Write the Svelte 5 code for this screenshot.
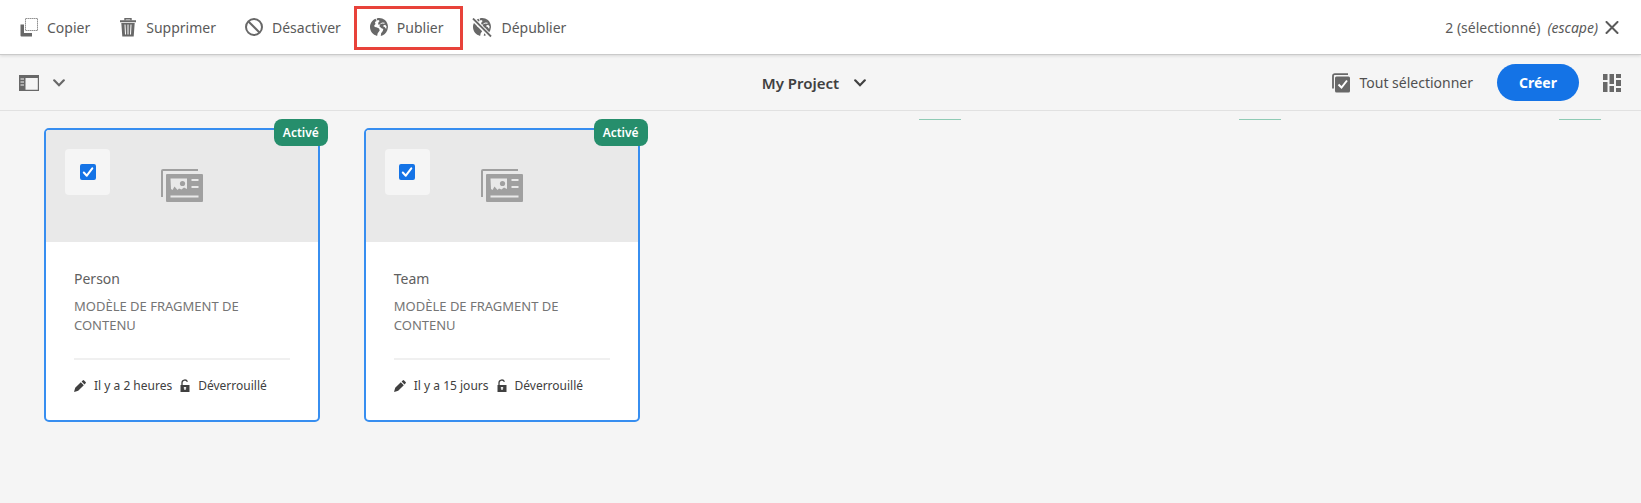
<script>
  let cards = $state([
    { title: 'Person', modified: 'Il y a 2 heures', selected: true },
    { title: 'Team', modified: 'Il y a 15 jours', selected: true }
  ]);
  const emptySlots = [1, 2, 3];
</script>

{#snippet chevron()}
  <svg class="chevron" width="12" height="8" viewBox="0 0 12 8" aria-hidden="true">
    <path d="M1.2 1.3 6 6.2l4.8-4.9" fill="none" stroke="currentColor" stroke-width="2.2" stroke-linecap="round" />
  </svg>
{/snippet}

{#snippet land()}
  <path d="M5.600.8C2.300 2.200 0 5.400 0 9.100c0 4.300 3 7.900 7.100 8.800l.6-2.600 2-2.700-.6-2.100-2.700-1.200-1.700-.2-.5-1.500 1.300-1.500-.6-2 1.700-1z" />
  <path d="M6.700.4C9.600-.5 12.600.2 14.900 2.100c1.800 1.600 3 4.100 3.100 6.900l-.7 3.300c-1.100 2.900-3.500 5-6.500 5.600l.3-2.700 1.700-2.300.5-2-1.800-.6-2-1.700.4-2.100 2.100-1.100 2.400.4.3-1-2-.3-1.600.6-1.400 1.500-1.700-.2.5-2.200 1.200-1.100-1.500-1-1.300.5z" />
  <path d="M15.200 6.700l1.400 1.900-.5 2.300-1.500-1.800-1.600-.9.700-1z" fill="#fff" />
{/snippet}

<div class="page">
  <header class="actions">
    <div class="group">
      <button class="action">
        <svg width="18" height="20" viewBox="0 0 18 20" aria-hidden="true">
          <path d="M.5 6.500H4V15h8v3.500H1.500a1 1 0 0 1-1-1z" fill="currentColor" />
          <path d="M5.500.5h12v12h-12z" fill="none" stroke="currentColor" stroke-dasharray="1.400 .6" stroke-opacity=".8" />
        </svg>
        Copier
      </button>
      <button class="action">
        <svg width="18" height="20" viewBox="0 0 18 20" aria-hidden="true">
          <path d="M6 2.500V.8h6v1.700" fill="none" stroke="currentColor" stroke-width="1.400" />
          <path d="M1 2.200h16v2H1zM2.300 5h13.400l-1 13.500H3.300z" fill="currentColor" />
          <path d="M6 6.500l.5 10M9 6.500v10M12 6.500l-.5 10" stroke="#fff" stroke-width="1" />
        </svg>
        Supprimer
      </button>
      <button class="action">
        <svg width="18" height="20" viewBox="0 0 18 20" aria-hidden="true">
          <g fill="none" stroke="currentColor" stroke-width="2">
            <circle cx="9" cy="9" r="8" /><path d="M3.500 3.500l11 11" />
          </g>
        </svg>
        Désactiver
      </button>
      <button class="action marked">
        <svg width="18" height="20" viewBox="0 0 18 20" aria-hidden="true">
          <g fill="currentColor">{@render land()}</g>
        </svg>
        Publier
      </button>
      <button class="action">
        <svg width="20" height="20" viewBox="0 0 20 20" aria-hidden="true">
          <g fill="currentColor" transform="translate(1 0)">{@render land()}</g>
          <path d="M0 0l19 19" stroke="#fff" stroke-width="4.400" />
          <path d="M1 .5l18 18" stroke="currentColor" stroke-width="1.800" />
        </svg>
        Dépublier
      </button>
    </div>
    <button class="deselect">
      <span>2 (sélectionné)</span> <em>(escape)</em>
      <svg width="14" height="14" viewBox="0 0 14 14" aria-hidden="true">
        <path d="M1.500 1l11 11M12.500 1l-11 11" stroke="currentColor" stroke-width="2" stroke-linecap="round" />
      </svg>
    </button>
  </header>

  <nav class="bar">
    <button class="rail" aria-label="Rail">
      <svg width="20" height="18" viewBox="0 0 20 18" aria-hidden="true">
        <path d="M0 1h20v16H0zM6.500 4v11.800h12.300V4z" fill="currentColor" fill-rule="evenodd" />
        <path d="M1.500 5h3.500M1.500 8h3.500M1.500 11h3.500" stroke="#f5f5f5" stroke-width="1" />
      </svg>
      {@render chevron()}
    </button>
    <button class="crumb">My Project {@render chevron()}</button>
    <div class="tools">
      <button class="all">
        <svg width="18" height="20" viewBox="0 0 18 20" aria-hidden="true">
          <path d="M1 15.500V3a1.800 1.800 0 0 1 1.800-1.800H16" fill="none" stroke="currentColor" stroke-width="1.800" />
          <rect x="3" y="3.500" width="15" height="16" rx="1.500" fill="currentColor" />
          <path d="M6.500 11.500l3 3 5.500-7" fill="none" stroke="#fff" stroke-width="2" />
        </svg>
        Tout sélectionner
      </button>
      <button class="create">Créer</button>
      <button class="view" aria-label="Affichage">
        <svg width="18" height="20" viewBox="0 0 18 20" aria-hidden="true">
          <path d="M0 1h4.500v6H0zM0 9h4.500v10H0zM6.500 1H11v10H6.500zM6.500 13H11v6H6.500zM13 1h5v4h-5zM13 7h5v6h-5zM13 15h5v4h-5z" fill="currentColor" />
        </svg>
      </button>
    </div>
  </nav>

  <main class="grid">
    {#each cards as card}
      <article class="card" class:selected={card.selected}>
        <span class="badge">Activé</span>
        <div class="preview">
          <label class="tick">
            <input type="checkbox" bind:checked={card.selected} aria-label={card.title} />
            <svg width="16" height="16" viewBox="0 0 16 16" aria-hidden="true">
              <path d="M3.800 8.500l3 3.200 5.500-7.400" fill="none" stroke="#fff" stroke-width="2" stroke-linecap="round" stroke-linejoin="round" />
            </svg>
          </label>
          <svg width="42" height="34" viewBox="0 0 42 34" aria-hidden="true">
            <path d="M1 28V2a1 1 0 0 1 1-1h35" fill="none" stroke="#a0a0a0" stroke-width="2" />
            <rect x="5" y="5" width="37" height="28" rx="1" fill="#a0a0a0" />
            <path d="M9.500 9.500H26v10.500l-3-1.500-2.500 2-2.500-1-1.500 1.500-3-3.500-2 3.500-1.500-1z" fill="#e9e9e9" />
            <circle cx="21.500" cy="14.500" r="2.600" fill="#a0a0a0" />
            <path d="M30.500 11h7M30.500 18h7M9.500 27.500h28" stroke="#e9e9e9" stroke-width="2.200" />
          </svg>
        </div>
        <div class="body">
          <h2>{card.title}</h2>
          <p>MODÈLE DE FRAGMENT DE CONTENU</p>
          <footer>
            <svg width="12" height="12" viewBox="0 0 12 12" aria-hidden="true">
              <path d="M0 12l1.200-4.200 5.600-5.600 3 3-5.600 5.600zM7.600 1.500l1.100-1.100a1 1 0 0 1 1.400 0l1.500 1.500a1 1 0 0 1 0 1.400l-1.100 1.100z" fill="currentColor" />
            </svg>
            <span class="when">{card.modified}</span>
            <svg width="10" height="14" viewBox="0 0 10 14" aria-hidden="true">
              <path d="M2 6V3.800a2.800 2.800 0 0 1 5.400-1" fill="none" stroke="currentColor" stroke-width="1.300" />
              <path d="M.5 6h9v7h-9z" fill="currentColor" />
              <path d="M5 8v3M3.800 8.800h2.400" stroke="#fff" stroke-width="1.200" />
            </svg>
            <span>Déverrouillé</span>
          </footer>
        </div>
      </article>
    {/each}
    {#each emptySlots as slot (slot)}
      <div class="slot"></div>
    {/each}
  </main>
</div>

<style>
  :global(body) {
    background: #f5f5f5;
  }
  .page {
    min-height: 100vh;
    background: #f5f5f5;
    color: #505050;
    font: 14px/20px 'Noto Sans', sans-serif;
    overflow-x: hidden;
  }
  button {
    display: flex;
    align-items: center;
    padding: 0;
    border: 0;
    background: none;
    color: inherit;
    font: inherit;
    white-space: nowrap;
    cursor: pointer;
  }
  svg {
    display: block;
    flex: none;
  }
  .actions {
    position: relative;
    display: flex;
    align-items: center;
    justify-content: space-between;
    padding: 18px 14px 16px 20px;
    border-bottom: 1px solid #cacaca;
    background: #fff;
    box-shadow: 0 1px 3px rgba(0, 0, 0, 0.12);
    color: #5a5a5a;
  }
  .group {
    display: flex;
    gap: 29px;
  }
  .action {
    position: relative;
    gap: 9px;
  }
  .action svg {
    color: #686868;
  }
  .marked::after {
    content: '';
    position: absolute;
    inset: -12px -20px -12px -16px;
    border: 3px solid #e8423a;
  }
  .deselect {
    gap: 7px;
    padding-right: 8px;
  }
  .bar {
    display: grid;
    grid-template-columns: 1fr auto 1fr;
    align-items: center;
    height: 55px;
    padding: 0 20px 0 19px;
    border-bottom: 1px solid #e1e1e1;
  }
  .rail {
    gap: 14px;
    color: #686868;
  }
  .crumb {
    gap: 15px;
    margin-right: 12px;
    color: #404040;
    font-size: 15px;
    font-weight: 600;
  }
  .tools {
    display: flex;
    align-items: center;
    justify-content: flex-end;
    gap: 24px;
  }
  .all {
    gap: 9px;
  }
  .all svg,
  .view {
    color: #686868;
  }
  .create {
    height: 37px;
    padding: 0 22px;
    border-radius: 19px;
    background: #1473e6;
    color: #fff;
    font-weight: 700;
  }
  .grid {
    display: grid;
    grid-template-columns: repeat(5, minmax(0, 1fr));
    gap: 44px;
    padding: 17px 42px 44px 44px;
  }
  .card {
    position: relative;
    border: 2px solid #d5d5d5;
    border-radius: 5px;
    background: #fff;
  }
  .selected {
    border-color: #378ef0;
  }
  .badge {
    position: absolute;
    top: -11px;
    right: -10px;
    padding: 4px 9px;
    border-radius: 8px;
    background: #268e6c;
    color: #fff;
    font-size: 12px;
    font-weight: 600;
    line-height: 19px;
  }
  .preview {
    display: grid;
    place-items: center;
    height: 112px;
    border-radius: 3px 3px 0 0;
    background: #e9e9e9;
  }
  .tick {
    position: absolute;
    top: 19px;
    left: 19px;
    display: grid;
    place-content: center;
    width: 45px;
    height: 46px;
    border-radius: 4px;
    background: #f5f5f5;
  }
  .tick input,
  .tick svg {
    grid-area: 1 / 1;
  }
  .tick input {
    appearance: none;
    width: 16px;
    height: 16px;
    margin: 0;
    border: 2px solid #6e6e6e;
    border-radius: 2px;
    background: #fff;
  }
  .tick input:checked {
    border-color: #1473e6;
    background: #1473e6;
  }
  .tick svg {
    pointer-events: none;
  }
  .body {
    padding: 27px 28px 24px;
  }
  h2 {
    margin: 0 0 8px;
    font-size: 14px;
    font-weight: 400;
    color: #606060;
  }
  p {
    margin: 0;
    color: #757575;
    font-size: 13px;
    line-height: 19px;
  }
  footer {
    display: flex;
    align-items: center;
    gap: 8px;
    margin-top: 23px;
    padding-top: 16px;
    border-top: 2px solid #f0f0f0;
    color: #404040;
    font-size: 12px;
    white-space: nowrap;
  }
  .slot {
    position: relative;
  }
  .slot::before {
    content: '';
    position: absolute;
    top: -9px;
    right: -2px;
    width: 42px;
    height: 1px;
    background: #8fcbb5;
  }
</style>
